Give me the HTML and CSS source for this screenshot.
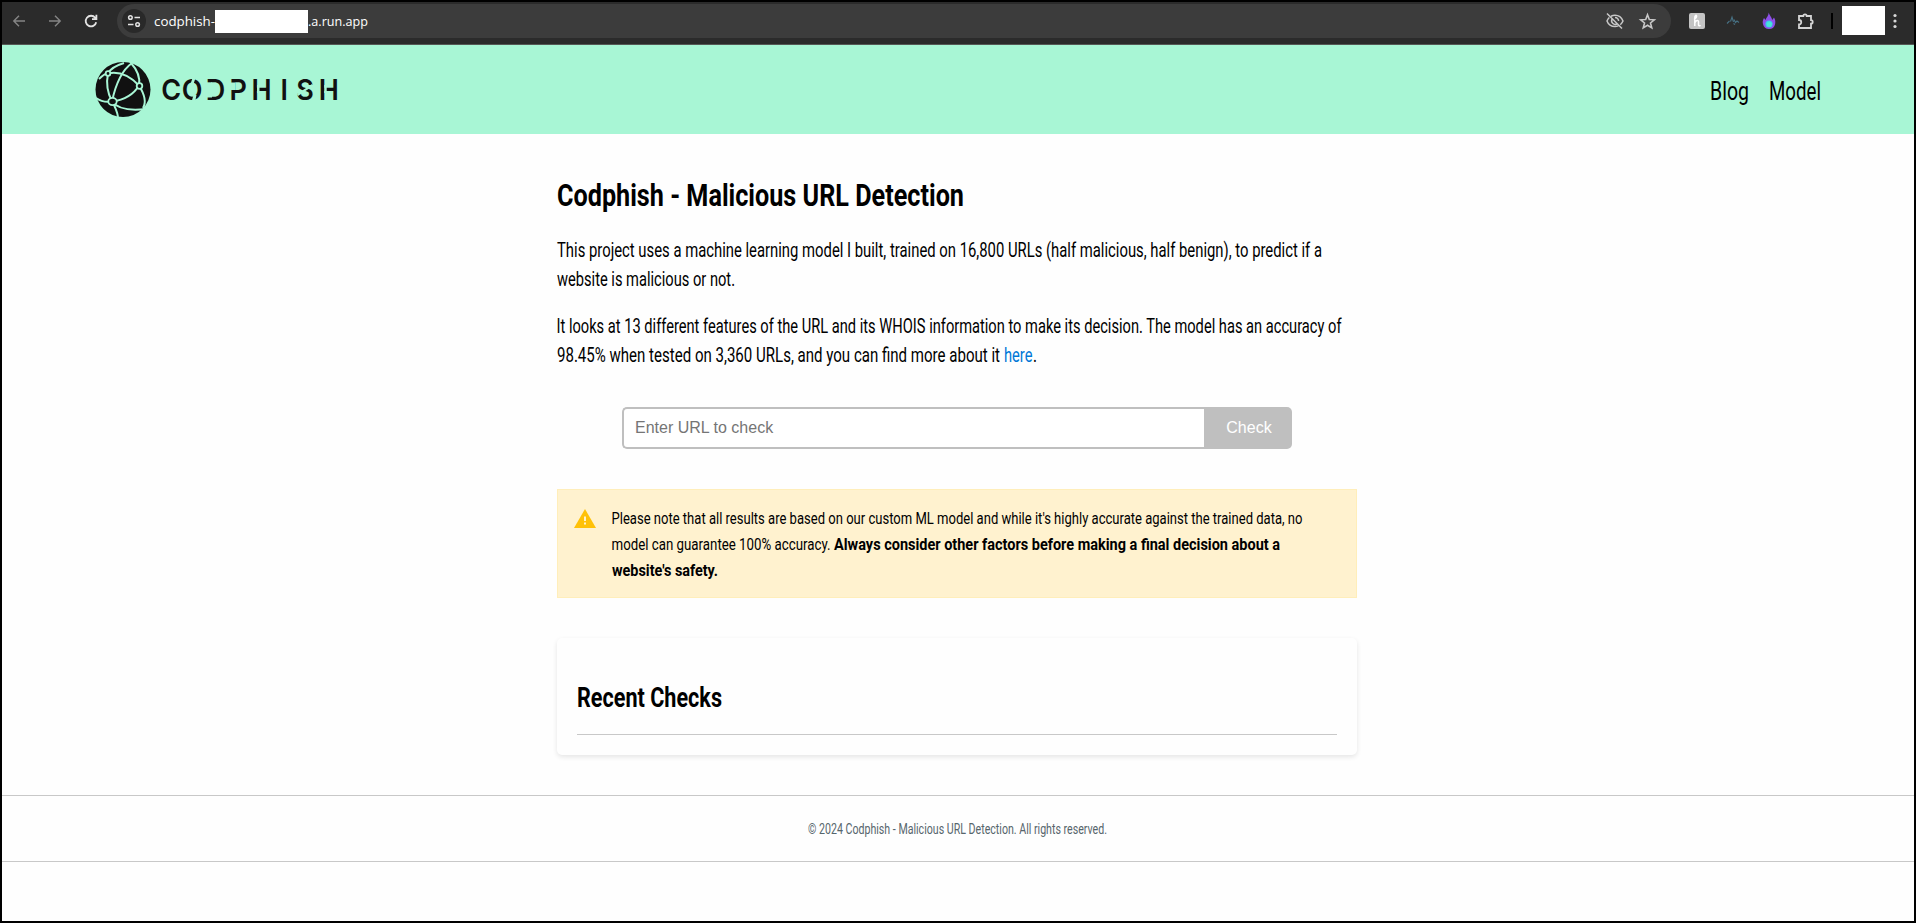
FILE: index.html
```
<!DOCTYPE html>
<html lang="en">
<head>
<meta charset="utf-8">
<title>Codphish - Malicious URL Detection</title>
<link rel="stylesheet" href="styles.css">
</head>
<body>
<div class="window">
  <div class="toolbar">
    <div class="nav-buttons">
      <svg class="tool-icon dim" viewBox="0 0 16 16"><path d="M14 8H3M8 2.8 2.8 8 8 13.2"/></svg>
      <svg class="tool-icon dim" viewBox="0 0 16 16"><path d="M2 8h11M8 2.8 13.2 8 8 13.2"/></svg>
      <svg class="tool-icon reload" viewBox="0 0 16 16"><path d="M13.2 9.2A5.3 5.3 0 1 1 12.2 4.8L13.3 6M13.4 1.8V6.2H9"/></svg>
    </div>
    <div class="omnibox">
      <div class="site-info">
        <svg viewBox="0 0 14 14"><circle cx="3.4" cy="3.5" r="1.8"/><path d="M7.5 3.5H13M1 10.5h5.5"/><circle cx="10.6" cy="10.5" r="1.8"/></svg>
      </div>
      <svg class="url" width="61" height="24"><text x="0" y="17" textLength="61" lengthAdjust="spacingAndGlyphs">codphish-</text></svg>
      <span class="redacted"></span>
      <svg class="url" width="61" height="24"><text x="0" y="17" textLength="60" lengthAdjust="spacingAndGlyphs">.a.run.app</text></svg>
      <div class="omnibox-actions">
        <svg class="eye" viewBox="0 0 20 18"><path d="M6 4.2A9.6 9.6 0 0 1 10 3.3c3.6 0 6.6 2.2 8 5.7a9.7 9.7 0 0 1-2.7 3.7M13.300 13.900A8.800 8.800 0 0 1 10 14.600C6.400 14.600 3.300 12.500 2 9a9.800 9.800 0 0 1 2.300-3.500M2 1.500 17 16.500M7 7.200a3.600 3.600 0 0 0 4.800 4.800M10 5.400a3.600 3.600 0 0 1 3.600 3.600"/></svg>
        <svg class="star" viewBox="0 0 16 16"><path d="M8 1.700 9.700 6.100 14.400 6.400 10.800 9.400 12 14 8 11.500 4 14 5.200 9.400 1.600 6.400 6.300 6.100Z"/></svg>
      </div>
    </div>
    <div class="extensions">
      <svg class="ext" viewBox="0 0 16 16"><rect width="16" height="16" rx="2" fill="#c4c4c4"/><path d="M5 6.500C6.500 5.500 8 4 7.500 2.800S5.500 3 5.800 5.500V13M5.800 10C6.500 7 9.800 6.500 9.500 9v3c0 1 1 1.200 2 .2" fill="none" stroke="#fff" stroke-width="1.500"/></svg>
      <svg class="ext" viewBox="0 0 16 16"><path d="M2 10.500 4.500 8M5.500 8.500 7 4l1.500 5M9 6.500l1.500 3L12 8l2 1.500M8.500 10.500 10 11.500" fill="none" stroke="#477184" stroke-width="1.100"/></svg>
      <svg class="ext" viewBox="0 0 16 18"><path d="M7.500 .5C9 4 10.600 5 11.200 8L13 5.500C14.500 8 14.600 10 14 12.500A6.200 6.200 0 0 1 2 12.300C1.300 9.500 2 7.500 3 6L4.700 8C5.300 5 7.800 4 7.500 .5Z" fill="#8d50e8"/><circle cx="8" cy="12" r="3.600" fill="#3cc5ef"/><path d="m5.500 11 3-1.700 2.800 2-1.500 3.700-3.500-.5Z" fill="#48e4d5"/></svg>
      <svg class="ext puzzle" viewBox="0 0 18 18"><path d="M2 4H6.300A1.700 1.700 0 0 1 9.700 4H14V8.200A1.700 1.700 0 0 1 14 11.600V16H2V12.500A2.200 2.200 0 0 0 2 8Z"/></svg>
      <span class="divider"></span>
      <span class="profile"></span>
      <svg class="menu" viewBox="0 0 4 16"><circle cx="2" cy="2.500" r="1.600"/><circle cx="2" cy="8" r="1.600"/><circle cx="2" cy="13.500" r="1.600"/></svg>
    </div>
  </div>

  <header class="site-header">
    <svg class="brand" width="248" height="58" viewBox="0 0 248 58">
      <circle cx="28" cy="28.500" r="27.500" fill="#111"/>
      <g class="mesh">
        <path d="M4 18Q10 12 13 12.500Q16 6 29 2M13 12.500Q29 9 44 24.500Q46 13 36 2"/>
        <path d="M13 12.500Q10 27 17 40.500Q23 12 37 2"/>
        <path d="M1 37Q8 42 17 40.500Q36 38 44 24.500Q53 39 48 47"/>
        <path d="M17 40.500Q25 51 51 48M17 40.500Q22 49 23 56"/>
      </g>
      <g class="nodes"><circle cx="13" cy="12.500" r="2.300"/><circle cx="44.500" cy="25" r="2.800"/><ellipse cx="17.500" cy="40.500" rx="4.200" ry="3.600"/></g>
      <text class="wordmark" y="39.500" transform="scale(.93 1)" x="71.300 93.200 119 144.600 168.300 199.500 216.500 240.500">CODPHISH</text>
      <g class="stencil">
        <path d="M97.500 17h3l-2 6h-3zM98.500 34h3l-1.500 7h-3.500z"/>
        <rect x="111" y="21.300" width="6" height="15.200"/>
        <rect x="135" y="21.500" width="5" height="7.500"/>
        <rect x="162" y="24" width="2.500" height="8"/>
        <path d="m202 33 15-10 1 2-15 10z"/>
        <rect x="229.200" y="24" width="2.500" height="8"/>
      </g>
    </svg>
    <nav class="site-nav">
      <svg width="39" height="40"><text y="28" textLength="39" lengthAdjust="spacingAndGlyphs">Blog</text></svg>
      <svg width="52" height="40"><text y="28" textLength="52" lengthAdjust="spacingAndGlyphs">Model</text></svg>
    </nav>
  </header>

  <main class="content">
    <h1 class="title"><svg width="408" height="48"><text y="34" textLength="407" lengthAdjust="spacingAndGlyphs">Codphish - Malicious URL Detection</text></svg></h1>
    <p class="intro">
      <svg width="766" height="29"><text y="21.500" textLength="765" lengthAdjust="spacingAndGlyphs">This project uses a machine learning model I built, trained on 16,800 URLs (half malicious, half benign), to predict if a</text></svg>
      <svg width="766" height="29"><text y="21.500" textLength="178" lengthAdjust="spacingAndGlyphs">website is malicious or not.</text></svg>
    </p>
    <p class="intro">
      <svg width="786" height="29"><text x="-.500" y="21.500" textLength="785" lengthAdjust="spacingAndGlyphs">It looks at 13 different features of the URL and its WHOIS information to make its decision. The model has an accuracy of</text></svg>
      <span class="line">
        <svg width="447" height="29"><text y="21.500" textLength="443" lengthAdjust="spacingAndGlyphs">98.45% when tested on 3,360 URLs, and you can find more about it</text></svg>
        <a class="link" href="#"><svg width="29" height="29"><text y="21.500" textLength="28.500" lengthAdjust="spacingAndGlyphs">here</text></svg></a>
        <svg width="4" height="29"><text y="21.500" textLength="4" lengthAdjust="spacingAndGlyphs">.</text></svg>
      </span>
    </p>
    <form class="search">
      <input class="search-input" type="text" placeholder="Enter URL to check">
      <button class="search-button" type="button">Check</button>
    </form>
    <div class="notice">
      <svg class="warning" viewBox="0 0 22 19"><path d="M11 0 22 19H0Z" fill="#ffc107"/><path d="M10 7.500h2V12h-2zM10 13.500h2v2h-2z" fill="#fff3cd"/></svg>
      <div class="notice-text">
        <svg width="692" height="26"><text x="-.500" y="17" textLength="691" lengthAdjust="spacingAndGlyphs">Please note that all results are based on our custom ML model and while it's highly accurate against the trained data, no</text></svg>
        <svg width="692" height="26"><text x="-.500" y="17" textLength="219" lengthAdjust="spacingAndGlyphs">model can guarantee 100% accuracy.</text><text class="strong" x="222" y="17" textLength="446" lengthAdjust="spacingAndGlyphs">Always consider other factors before making a final decision about a</text></svg>
        <svg width="692" height="26"><text class="strong" y="17" textLength="106" lengthAdjust="spacingAndGlyphs">website's safety.</text></svg>
      </div>
    </div>
    <section class="recent">
      <h2 class="recent-title"><svg width="146" height="40"><text y="30" textLength="145" lengthAdjust="spacingAndGlyphs">Recent Checks</text></svg></h2>
    </section>
  </main>

  <footer class="site-footer">
    <svg width="300" height="24"><text y="16" textLength="299" lengthAdjust="spacingAndGlyphs">© 2024 Codphish - Malicious URL Detection. All rights reserved.</text></svg>
  </footer>
</div>
</body>
</html>
```
FILE: styles.css
```
* { box-sizing: border-box; }
body { margin: 0; background: #fff; font-family: Roboto, "Liberation Sans", sans-serif; color: #000; }
svg { display: block; flex: none; overflow: visible; }

.window { height: 923px; border: 2px solid #000; background: #fefefe; overflow: hidden; }

.toolbar { display: flex; align-items: flex-start; height: 43px; padding-top: 2px; background: #2b2b2b; border-bottom: 1px solid #565956; }
.nav-buttons { display: flex; align-items: center; gap: 20px; width: 115px; height: 34px; padding-left: 9px; }
.tool-icon { width: 16px; height: 16px; fill: none; stroke: #e3e3e3; stroke-width: 1.7; }
.tool-icon.dim { stroke: #858585; stroke-width: 1.4; }
.tool-icon.reload { stroke-width: 1.8; }
.omnibox { display: flex; align-items: center; width: 1554px; height: 34px; padding-left: 5px; border-radius: 17px; background: #3c3c3c; }
.site-info { display: flex; align-items: center; justify-content: center; width: 24px; height: 24px; margin-right: 8px; border-radius: 50%; background: #292929; }
.site-info svg { width: 14px; height: 14px; fill: none; stroke: #e3e3e3; stroke-width: 1.5; }
.url { font-family: "Open Sans", "Noto Sans", sans-serif; font-size: 13.5px; fill: #fff; }
.redacted { width: 93px; height: 23px; background: #fff; }
.omnibox-actions { display: flex; align-items: center; gap: 14px; margin-left: auto; padding-right: 15px; }
.omnibox-actions svg { fill: none; stroke: #c7c7c7; stroke-width: 1.5; }
.eye { width: 20px; height: 18px; }
.star { width: 17px; height: 17px; }
.extensions { display: flex; align-items: center; height: 34px; padding-left: 18px; }
.ext { width: 16px; height: 18px; margin-right: 20px; }
.puzzle { width: 18px; margin-right: 16px; fill: none; stroke: #d5d5d5; stroke-width: 1.8; }
.divider { width: 2px; height: 16px; margin-right: 9px; background: #000; }
.profile { width: 43px; height: 29px; margin: -2px 8px 0 0; background: #fff; }
.menu { width: 4px; height: 16px; fill: #d8d8d8; }

.site-header { display: flex; justify-content: space-between; align-items: center; height: 89px; padding: 0 93px; background: #a8f6d5; }
.mesh { fill: none; stroke: #a8f6d5; stroke-width: 2; }
.nodes { fill: #111; stroke: #a8f6d5; stroke-width: 1.8; }
.wordmark { font: 600 29px Inter, sans-serif; fill: #111; }
.stencil { fill: #a8f6d5; }
.site-nav { display: flex; gap: 20px; padding-top: 4px; font-size: 26px; }

.content { width: 800px; margin: 0 0 0 555px; }
.title { margin: 38px 0 0; font-size: 31px; font-weight: 700; }
.intro { margin: 15px 0 0; font-size: 19.5px; }
.intro + .intro { margin-top: 18px; }
.line { display: flex; }
.link { fill: #0078d7; }
.search { display: flex; width: 670px; height: 42px; margin: 38px auto 40px; }
.search-input { flex: 1; min-width: 0; padding: 0 11px; border: 2px solid #bfbfbf; border-right: 0; border-radius: 5px 0 0 5px; background: #fff; font: 16px "Liberation Sans", sans-serif; }
.search-input::placeholder { color: #757575; }
.search-button { width: 88px; padding: 0 0 0 2px; border: 0; border-radius: 0 5px 5px 0; background: #bfbfbf; color: #fff; font: 16px "Liberation Sans", sans-serif; }
.notice { display: flex; gap: 16px; height: 109px; padding: 17px 16px; border: 1px solid #ffeeba; background: #fff2cf; font-size: 17.4px; }
.warning { width: 22px; height: 19px; margin-top: 2px; }
.strong { font-weight: 700; }
.recent { height: 117px; margin-top: 40px; padding: 39px 20px 0; border-radius: 5px; background: #fefefe; box-shadow: 0 2px 5px rgba(0, 0, 0, .1); }
.recent-title { height: 58px; margin: 0; border-bottom: 1px solid #c8c8c8; font-size: 27px; font-weight: 700; }
.site-footer { display: flex; justify-content: center; height: 67px; margin-top: 40px; padding-top: 22px; border: solid #c8c8c8; border-width: 1px 0; font-size: 14.5px; fill: #56656c; }
```
